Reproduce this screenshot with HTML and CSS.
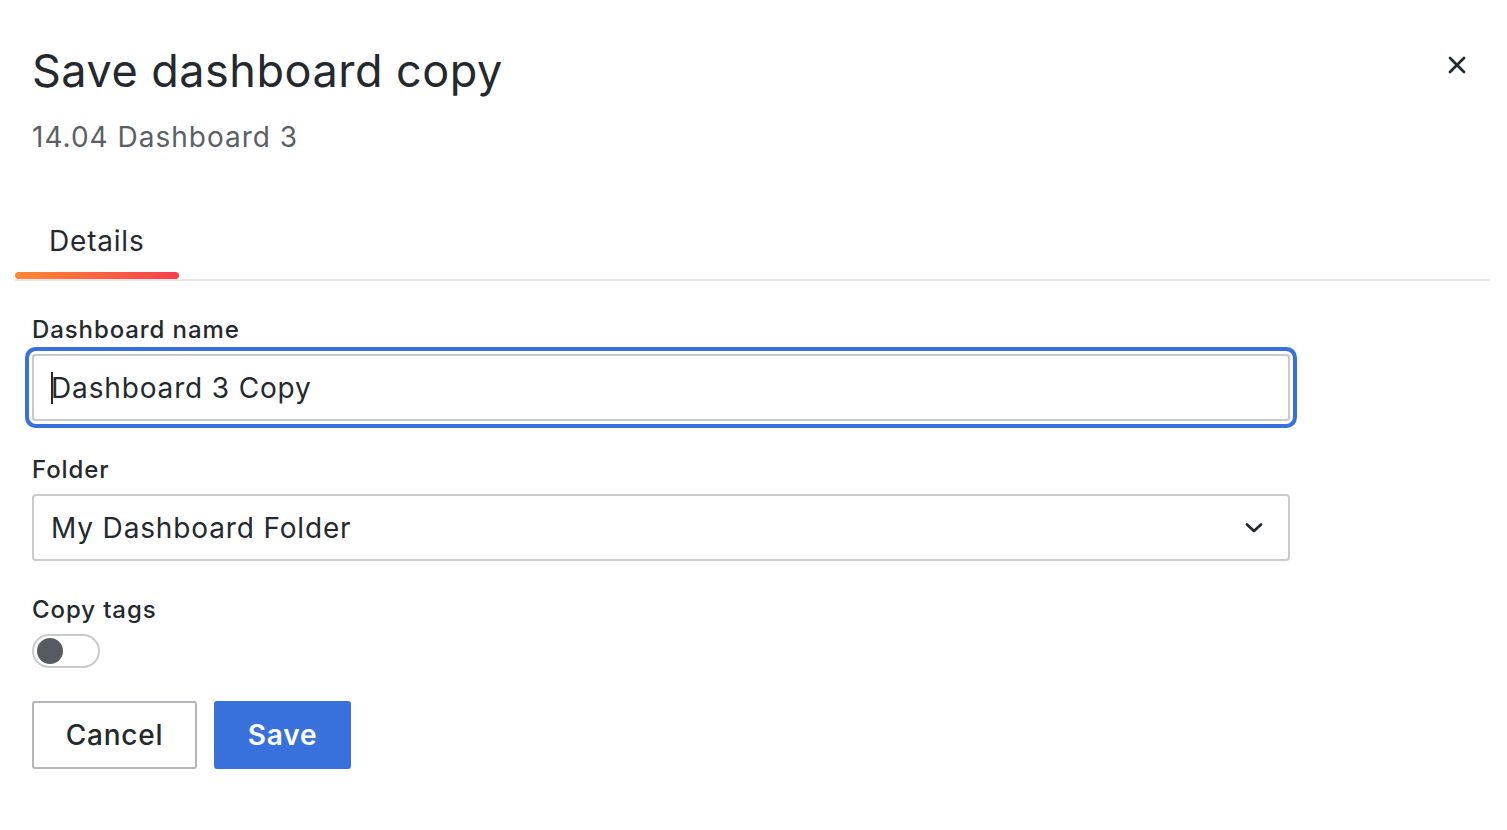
FILE: index.html
```html
<!DOCTYPE html>
<html lang="en">
<head>
<meta charset="utf-8">
<title>Save dashboard copy</title>
<link rel="stylesheet" href="styles.css">
</head>
<body>
<div class="modal">
  <header class="modal-header">
    <div class="titles">
      <h1 class="title">Save dashboard copy</h1>
      <div class="subtitle">14.04 Dashboard 3</div>
    </div>
    <button class="close" aria-label="Close">
      <svg width="20" height="20" viewBox="0 0 20 20"><path d="M3 3 L17 17 M17 3 L3 17" stroke="#24292e" stroke-width="2.8" stroke-linecap="round"/></svg>
    </button>
  </header>
  <nav class="tabs">
    <div class="tab active">Details</div>
  </nav>
  <form class="form">
    <div class="field">
      <label class="label">Dashboard name</label>
      <div class="input focused"><span class="caret"></span>Dashboard 3 Copy</div>
    </div>
    <div class="field">
      <label class="label">Folder</label>
      <div class="input select">
        <span>My Dashboard Folder</span>
        <svg class="chev" width="20" height="12" viewBox="0 0 20 12"><path d="M3 2.5 L10 9 L17 2.5" fill="none" stroke="#24292e" stroke-width="2.8" stroke-linecap="round" stroke-linejoin="round"/></svg>
      </div>
    </div>
    <div class="field">
      <label class="label">Copy tags</label>
      <div class="switch"><span class="knob"></span></div>
    </div>
    <div class="actions">
      <button type="button" class="btn secondary">Cancel</button>
      <button type="button" class="btn primary">Save</button>
    </div>
  </form>
</div>
</body>
</html>
```
FILE: styles.css
```css
* { box-sizing: border-box; }
html, body { margin: 0; background: #fff; }
body {
  font-family: Inter, "Noto Sans", "Liberation Sans", sans-serif;
  color: #24292e;
  width: 1507px;
  height: 830px;
  overflow: hidden;
}
.modal { padding: 45px 17px 0 15px; }
.modal-header {
  display: flex;
  justify-content: space-between;
  align-items: flex-start;
  padding-left: 17px;
}
.title {
  margin: 0;
  font-size: 45px;
  line-height: 52px;
  font-weight: 400;
  letter-spacing: 0.5px;
}
.subtitle {
  margin-top: 22px;
  font-size: 28px;
  line-height: 36px;
  color: #5b5f65;
  letter-spacing: 1px;
}
.close {
  background: none;
  border: 0;
  padding: 0;
  margin: 10px 23px 0 0;
  width: 20px;
  height: 20px;
  display: flex;
}
.tabs {
  margin-top: 68px;
  border-bottom: 2px solid #e6e6e8;
  display: flex;
}
.tab {
  position: relative;
  padding: 0 34px 0 34px;
  font-size: 28px;
  line-height: 36px;
  height: 56px;
  letter-spacing: 0.8px;
}
.tab.active::after {
  content: "";
  position: absolute;
  left: 0;
  right: 0;
  bottom: 0;
  height: 7px;
  border-radius: 4px;
  background: linear-gradient(90deg, #ff8833, #f53e4c);
}
.form { padding: 33px 0 0 17px; }
.field { margin-bottom: 33px; }
.label {
  display: block;
  font-size: 24px;
  line-height: 32px;
  font-weight: 500;
  margin-bottom: 8px;
  letter-spacing: 0.9px;
}
.input {
  width: 1258px;
  height: 67px;
  border: 2px solid #c9cacc;
  border-radius: 4px;
  padding: 0 17px;
  font-size: 28px;
  letter-spacing: 0.85px;
  display: flex;
  align-items: center;
  position: relative;
}
.input.focused {
  box-shadow: 0 0 0 3px #fff, 0 0 0 7px #3871dc;
  border-radius: 4px;
}
.caret {
  display: inline-block;
  width: 2px;
  height: 32px;
  background: #24292e;
  margin-right: -2px;
}
.select { justify-content: space-between; padding-right: 24px; }
.chev { display: block; }
.switch {
  width: 68px;
  height: 34px;
  border: 2px solid #c9cacc;
  border-radius: 17px;
  padding: 2px 3px;
  display: flex;
  align-items: center;
}
.knob {
  width: 26px;
  height: 26px;
  border-radius: 50%;
  background: #575b61;
}
.actions { display: flex; gap: 17px; margin-top: 0; }
.btn {
  font-family: inherit;
  font-size: 28px;
  font-weight: 500;
  letter-spacing: 0.8px;
  height: 68px;
  border-radius: 3px;
  padding: 0;
  cursor: pointer;
}
.btn.secondary {
  background: #fff;
  border: 2px solid #b4b6b9;
  color: #24292e;
  width: 165px;
}
.btn.primary {
  background: #3871dc;
  border: 0;
  color: #fff;
  font-weight: 600;
  width: 137px;
}
```
